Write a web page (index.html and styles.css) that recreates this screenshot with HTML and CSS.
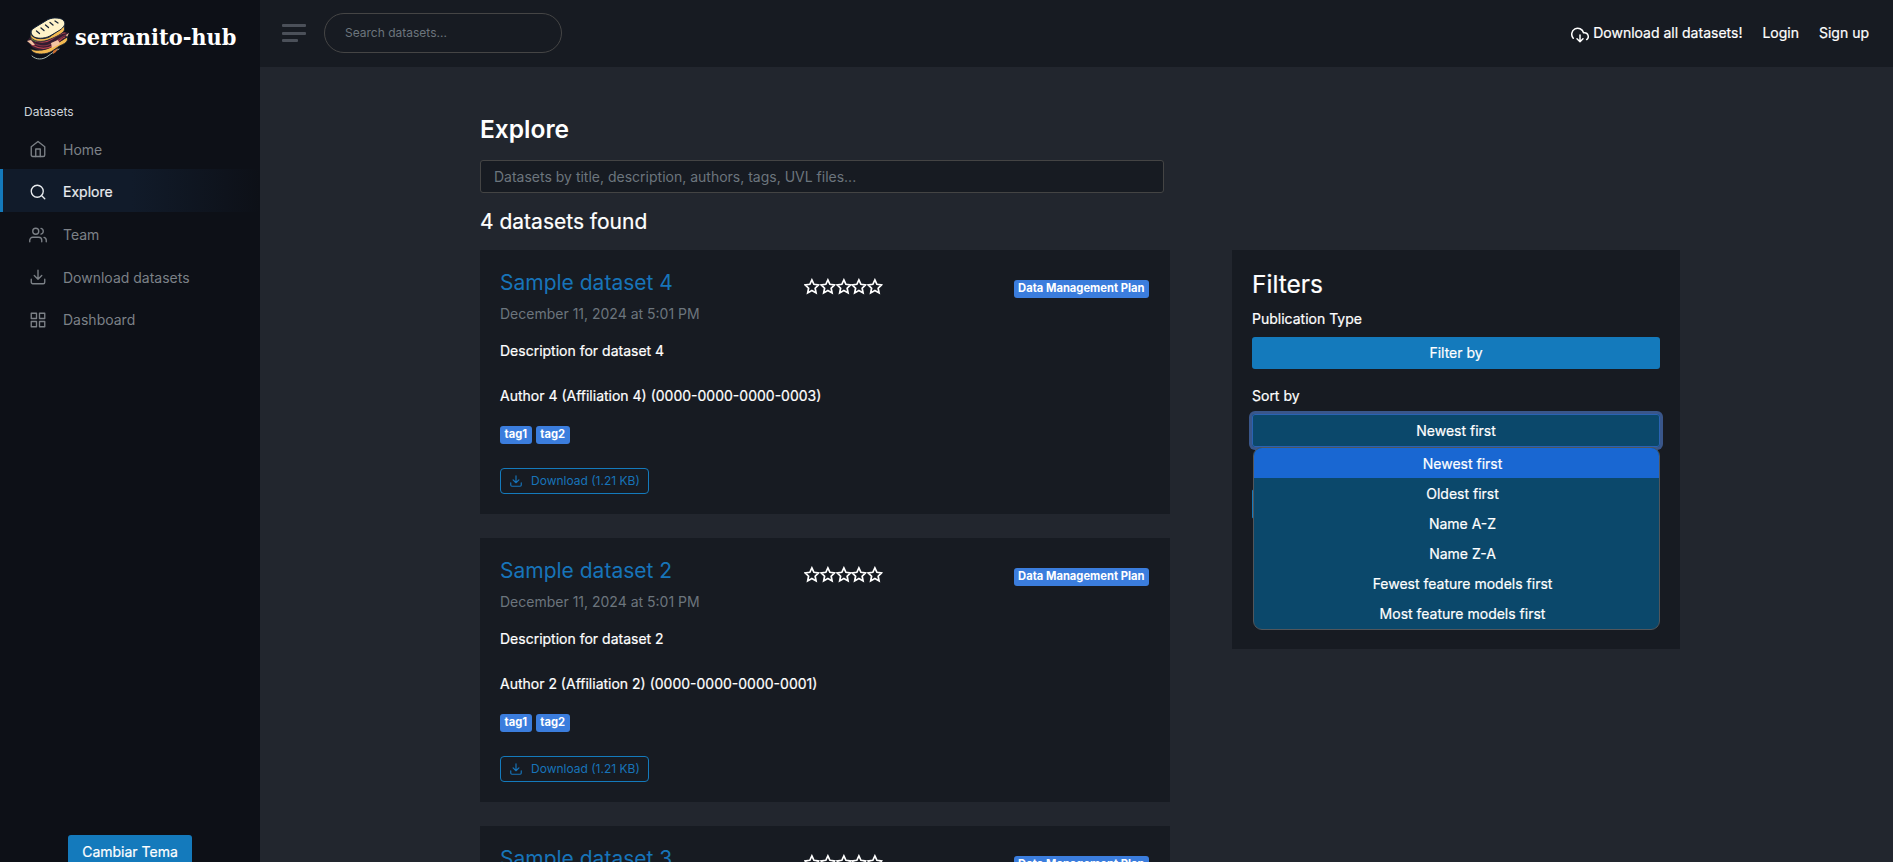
FILE: index.html
```html
<!DOCTYPE html>
<html lang="en">
<head>
<meta charset="utf-8">
<title>serranito-hub - Explore</title>
<link rel="stylesheet" href="styles.css">
</head>
<body>
<svg class="defs" width="0" height="0">
  <symbol id="download" viewBox="0 0 24 24"><path d="M21 15v4a2 2 0 0 1-2 2H5a2 2 0 0 1-2-2v-4M7 10l5 5 5-5M12 15V3"/></symbol>
  <symbol id="star" viewBox="0 0 24 24"><path d="M12 2l3.1 6.7 7.2.9-5.3 5 1.4 7.2-6.4-3.6-6.4 3.6L7 14.600l-5.300-5 7.200-.9z"/></symbol>
</svg>
<div class="wrapper">
  <nav class="sidebar">
    <a class="brand">
      <svg class="logo" viewBox="0 0 46 44">
        <path d="M4.500 32c2 4 6 5 11 5 9 0 13-5 18-8 4-2 7-3 8-6v-3L24 30c-7 4-14 4-19.500 2z" fill="#f3b950" stroke="#101d2c" stroke-width=".8"/>
        <path d="M6 39c4 4 11 4 16 0 4-3 7-5 11-7" fill="none" stroke="#a9b9ae" stroke-width="1"/>
        <path d="M5 19l-4 5 6 7c7 4 14 2 19-1l11-7 6-7-4-1z" fill="#331e31" stroke="none"/>
        <path d="M6 22c8 5 14 4 20 0s9-6 13-6M6 28c9 5 16 4 22 0s7-7 11-8" fill="none" stroke="#b8434f" stroke-width="1.200"/>
        <path d="M6 25c7 5 14 5 21 1s9-7 13-8" fill="none" stroke="#7c3042" stroke-width="1.200"/>
        <path d="M1 24l4-1 4 5-3 0zM25 26l7-3 2 4-8 4zM40 18l3-2-2 4z" fill="#f3c5a3" stroke="none"/>
        <path d="M5 20l5 2v3l-4-2z" fill="#5d9135" stroke="none"/>
        <path d="M27 34l5-3-2 4-3 2z" fill="#c96d32" stroke="none"/>
        <path d="M4.500 14c-1 9 13 9 19 6l15-11v4c-2 4-9 7-14 9-8 4-19 3-20-3z" fill="#f3b950" stroke="#142236" stroke-width=".8"/>
        <path d="M8 11L22 2.500c5-2.500 14-2 16 1.500 2 3 0 6-4 9l-10 6c-6 3-14 3-17 0-3-3-2-6 1-8z" fill="#fff3c9" stroke="#142236" stroke-width="1"/>
        <path d="M10.500 14l3 2.500M15 11l3 2.500M19.500 8l3 2.500M24 5.500l3 2.500M29 4l3 2" stroke="#172334" stroke-width="1.300" stroke-linecap="round"/>
      </svg>
      <svg class="wordmark" viewBox="0 0 162 34"><text x="0" y="25" textLength="161.500" lengthAdjust="spacingAndGlyphs">serranito-hub</text></svg>
    </a>
    <div class="side-head">Datasets</div>
    <a class="side-link"><svg class="ico" viewBox="0 0 24 24"><path d="M3 9l9-7 9 7v11a2 2 0 0 1-2 2H5a2 2 0 0 1-2-2z"/><path d="M9 22V12h6v10"/></svg>Home</a>
    <a class="side-link active"><svg class="ico" viewBox="0 0 24 24"><circle cx="11" cy="11" r="8"/><path d="M21 21l-4.35-4.35"/></svg>Explore</a>
    <a class="side-link"><svg class="ico" viewBox="0 0 24 24"><path d="M17 21v-2a4 4 0 0 0-4-4H5a4 4 0 0 0-4 4v2"/><circle cx="9" cy="7" r="4"/><path d="M23 21v-2a4 4 0 0 0-3-3.87M16 3.13a4 4 0 0 1 0 7.75"/></svg>Team</a>
    <a class="side-link"><svg class="ico"><use href="#download"/></svg>Download datasets</a>
    <a class="side-link"><svg class="ico" viewBox="0 0 24 24"><path d="M3 3h7v7H3zM14 3h7v7h-7zM14 14h7v7h-7zM3 14h7v7H3z"/></svg>Dashboard</a>
    <button class="theme">Cambiar Tema</button>
  </nav>
  <div class="main">
    <header class="topbar">
      <div class="burger"><i></i><i></i><i></i></div>
      <div class="search">Search datasets...</div>
      <a class="top-link"><svg class="cloud" viewBox="0 0 24 24"><path d="M8 17l4 4 4-4M12 12v9"/><path d="M20.88 18.09A5 5 0 0 0 18 9h-1.26A8 8 0 1 0 3 16.29"/></svg>Download all datasets!</a>
      <a class="top-link">Login</a>
      <a class="top-link">Sign up</a>
    </header>
    <main class="content">
      <h1>Explore</h1>
      <div class="query">Datasets by title, description, authors, tags, UVL files...</div>
      <h3>4 datasets found</h3>
      <div class="columns">
        <section class="results">
          <article class="card">
            <div class="card-head"><h2>Sample dataset 4</h2><div class="stars"><svg><use href="#star"/></svg><svg><use href="#star"/></svg><svg><use href="#star"/></svg><svg><use href="#star"/></svg><svg><use href="#star"/></svg></div><span class="badge">Data Management Plan</span></div>
            <p class="date">December 11, 2024 at 5:01 PM</p>
            <p class="desc">Description for dataset 4</p>
            <p class="author">Author 4 (Affiliation 4) (0000-0000-0000-0003)</p>
            <div class="tags"><span class="badge">tag1</span><span class="badge">tag2</span></div>
            <a class="dl"><svg><use href="#download"/></svg>Download (1.21 KB)</a>
          </article>
          <article class="card">
            <div class="card-head"><h2>Sample dataset 2</h2><div class="stars"><svg><use href="#star"/></svg><svg><use href="#star"/></svg><svg><use href="#star"/></svg><svg><use href="#star"/></svg><svg><use href="#star"/></svg></div><span class="badge">Data Management Plan</span></div>
            <p class="date">December 11, 2024 at 5:01 PM</p>
            <p class="desc">Description for dataset 2</p>
            <p class="author">Author 2 (Affiliation 2) (0000-0000-0000-0001)</p>
            <div class="tags"><span class="badge">tag1</span><span class="badge">tag2</span></div>
            <a class="dl"><svg><use href="#download"/></svg>Download (1.21 KB)</a>
          </article>
          <article class="card">
            <div class="card-head"><h2>Sample dataset 3</h2><div class="stars"><svg><use href="#star"/></svg><svg><use href="#star"/></svg><svg><use href="#star"/></svg><svg><use href="#star"/></svg><svg><use href="#star"/></svg></div><span class="badge">Data Management Plan</span></div>
          </article>
        </section>
        <aside class="filters">
          <h2>Filters</h2>
          <div class="label">Publication Type</div>
          <div class="select">Filter by</div>
          <div class="label sort">Sort by</div>
          <div class="select open">Newest first
            <div class="menu">
              <div class="selected">Newest first</div>
              <div>Oldest first</div>
              <div>Name A-Z</div>
              <div>Name Z-A</div>
              <div>Fewest feature models first</div>
              <div>Most feature models first</div>
            </div>
          </div>
          <div class="behind"></div>
        </aside>
      </div>
    </main>
  </div>
</div>
</body>
</html>
```
FILE: styles.css
```css
* { box-sizing: border-box; }
body { margin: 0; height: 862px; overflow: hidden; background: #22262e; color: #fff; font: 400 14px/21px Inter, sans-serif; }
h1, h2, h3, p { margin: 0; font-weight: 400; }
.desc, .author, .filters, .top-link, .theme, .active, h3 { -webkit-text-stroke: .2px currentColor; }
svg { fill: none; stroke: currentColor; stroke-width: 2; stroke-linecap: round; stroke-linejoin: round; flex: none; }
.defs { position: absolute; }
.wrapper { display: flex; height: 862px; overflow: hidden; white-space: nowrap; }
.sidebar { width: 260px; flex: none; background: #0d1017; display: flex; flex-direction: column; height: 862px; }
.brand { display: flex; align-items: flex-start; padding: 17px 0 0 26px; height: 100px; flex: none; }
.logo { width: 46px; height: 44px; }
.wordmark { width: 162px; height: 34px; margin: 3px 0 0 3px; }
.wordmark text { font: bold 23px "DejaVu Serif Condensed", "DejaVu Serif", serif; fill: #fff; stroke: none; }
.side-head { font-size: 12px; line-height: 18px; color: #ced4da; padding-left: 24px; height: 23.4px; margin-top: 3px; flex: none; }
.side-link { display: flex; align-items: center; height: 42.7px; border-left: 3px solid transparent; padding: 3px 0 0 26px; color: #7c8187; font-size: 14px; flex: none; }
.side-link.active { color: #e9ecef; border-color: #147abc; background: linear-gradient(90deg, #111b2a, #111b2a 50%, #0d1017); }
.ico { width: 18px; height: 18px; margin-right: 16px; stroke-width: 1.8; }
.theme { margin: auto auto -13px 68px; width: 124px; height: 40px; flex: none; padding: 0 0 7px; border: 0; border-radius: 3px; background: #147abc; color: #fff; font: 14px Inter, sans-serif; }
.main { flex: 1; min-width: 0; }
.topbar { height: 67px; background: #171b22; display: flex; align-items: center; padding: 0 24px 1px 0; }
.burger { margin-left: 22px; width: 24px; display: flex; flex-direction: column; gap: 5px; }
.burger i { height: 3px; border-radius: 1px; background: #4b5059; }
.burger i:last-child { width: 16px; margin-top: -1px; }
.search { width: 238px; height: 40px; margin-left: 18px; margin-right: auto; border: 1px solid #454545; border-radius: 20px; padding: 0 20px; line-height: 37px; font-size: 12px; color: #6c757d; }
.top-link { display: flex; align-items: center; margin-left: 20px; height: 22px; padding-bottom: 1px; }
.cloud { width: 18px; height: 18px; margin-right: 4px; margin-top: 4px; }
.content { width: 1200px; margin: 0 0 0 220px; }
h1 { font-size: 24.5px; font-weight: 600; line-height: 30px; padding-top: 47px; height: 93px; }
.query { width: 684px; height: 33px; border: 1px solid #444; border-radius: 3px; background: #171b22; color: #6c757d; padding: 0 13px; line-height: 32px; }
h3 { font-size: 21px; line-height: 28px; height: 57px; padding-top: 15px; }
.columns { display: flex; justify-content: space-between; align-items: flex-start; }
.results { width: 690px; display: flex; flex-direction: column; gap: 24px; }
.card { height: 264px; background: #171b22; padding: 20px; }
.card-head { display: flex; align-items: flex-start; height: 34px; }
.card-head h2 { width: 304px; font-size: 21px; line-height: 26px; color: #1774b9; }
.stars { display: flex; padding-top: 8px; margin-right: auto; }
.stars svg { width: 15.75px; height: 17px; stroke-width: 2.6; stroke-linejoin: miter; overflow: visible; }
.badge { background: #3b7ddd; border-radius: 3px; height: 18px; padding: 0 4.6px; font-size: 11.2px; line-height: 16.5px; font-weight: 700; }
.card-head .badge { margin: 10px 1px 0 0; }
.date { color: #6c757d; margin-top: -1px; }
.desc { margin-top: 16px; }
.author { margin-top: 24px; }
.tags { display: flex; gap: 4px; margin-top: 20px; }
.dl { display: inline-flex; align-items: center; width: 149px; height: 26px; margin-top: 24px; border: 1px solid #147abc; border-radius: 4px; color: #1774b9; font-size: 12px; padding: 0 0 1px 8px; }
.dl svg { width: 14px; height: 14px; margin: 1px 8px 0 0; }
.filters { width: 448px; height: 399px; background: #171b22; padding: 20px; }
.filters h2 { font-size: 24.5px; line-height: 28px; height: 38px; }
.label { height: 29px; line-height: 22px; }
.sort { margin-top: 16px; }
.select { height: 32px; border-radius: 3px; background: #147abc; text-align: center; line-height: 32px; position: relative; }
.select.open { height: 33px; line-height: 34px; background: #0b486b; outline: 1px solid #2a62b3; outline-offset: -1px; box-shadow: 0 0 0 3px #39568a; }
.menu { position: absolute; z-index: 1; top: 33px; left: 1px; right: 0; height: 183px; border: 1px solid #52565b; border-radius: 9px; background: #0b486b; overflow: hidden; }
.menu div { height: 30px; line-height: 32px; padding-left: 12px; }
.menu .selected { background: #1967d2; }
.behind { height: 30px; margin-top: 42px; border-radius: 2px; border: 1px solid #147abc; }
```
